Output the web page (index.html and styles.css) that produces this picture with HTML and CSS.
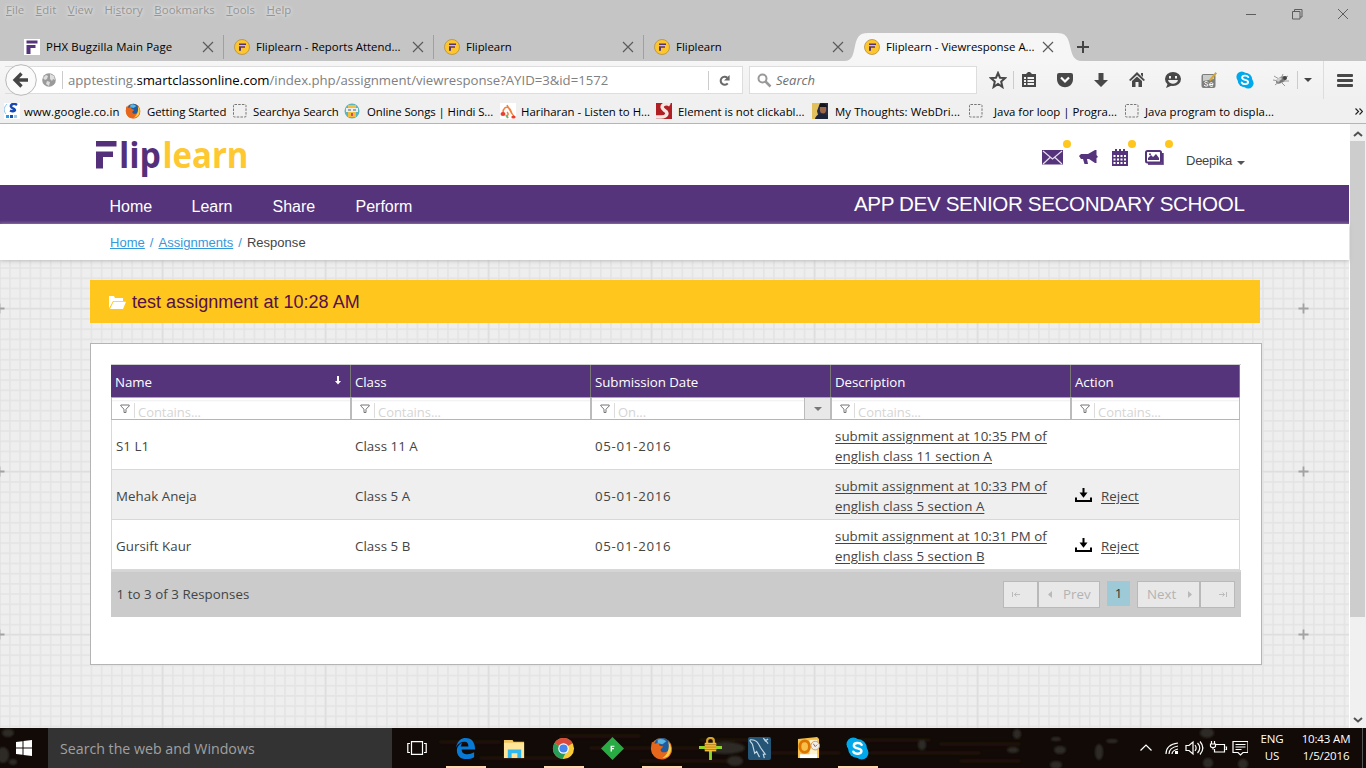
FILE: index.html
```html
<!DOCTYPE html>
<html lang="en">
<head>
<meta charset="utf-8">
<title>Fliplearn - Viewresponse Assignment</title>
<link rel="stylesheet" href="styles.css">
</head>
<body>
<svg class="defs" width="0" height="0">
  <symbol id="flip" viewBox="0 0 16 16"><circle cx="8" cy="8" r="7.500" fill="#fdc62e" stroke="#b58e3e" stroke-width=".8"/><path d="M5 4.500h7v1.600H5zM5 7.200h6v1.600H7v3H5z" fill="#55347c"/></symbol>
  <symbol id="x" viewBox="0 0 12 12"><path d="M1 1l10 10M11 1L1 11" stroke="#5b5b5b" stroke-width="1.200" fill="none"/></symbol>
  <symbol id="blank" viewBox="0 0 16 16"><rect x="1.500" y="1.500" width="12.500" height="12.500" rx="1" fill="none" stroke="#777" stroke-dasharray="2.500 1.200"/></symbol>
  <symbol id="funnel" viewBox="0 0 10 10"><path d="M.8 1h8.400v1L6 5.200V8.500H4V5.200L.8 2z" fill="none" stroke="#777"/></symbol>
  <symbol id="download" viewBox="0 0 17 14"><path d="M7.500 0h2v4.500h3L8.500 9.800 4.500 4.500h3zM0 9.500h2V12h13V9.500h2V14H0z" fill="#000"/></symbol>
  <symbol id="firefox" viewBox="0 0 24 24"><circle cx="12" cy="12" r="11" fill="#e8761c"/><circle cx="12.500" cy="9.500" r="8.500" fill="#215b9f"/><path d="M8 2.500a9 9 0 0 1 9 2l-4 3-5-1z" fill="#58b7e3"/><path d="M2 5l3 2 4-1 1 3 4 1-3 3c0 4 6 4 9 0 1-3 0-5-1-7 5 4 5 11 0 15-5 4-13 3-16-3-2-4-2-8-1-13z" fill="#e6661c"/><path d="M19 5c4 4 4 11 0 15-2 1-4 2-6 2 5-3 8-10 6-17z" fill="#f8cd4a"/></symbol>
  <symbol id="skype" viewBox="0 0 22 22"><circle cx="7" cy="7" r="6.500" fill="#00a9eb"/><circle cx="15" cy="15" r="6.500" fill="#00a9eb"/><circle cx="11" cy="11" r="9" fill="#00a9eb"/><path d="M15 7.500C13.500 5 7.500 5 7.500 8.300c0 3.400 7.300 1.800 7.300 5.200 0 3.300-6.300 3.300-7.800.5" fill="none" stroke="#fff" stroke-width="2.300" stroke-linecap="round"/></symbol>
</svg>

<header class="browser">
  <nav class="menu"><span><u>F</u>ile</span><span><u>E</u>dit</span><span><u>V</u>iew</span><span>Hi<u>s</u>tory</span><span><u>B</u>ookmarks</span><span><u>T</u>ools</span><span><u>H</u>elp</span>
    <svg class="winctl" width="112" height="14" viewBox="0 0 112 14"><path d="M6 7.500h10M52.500 4.500h7.500v7.500h-7.500zM54.500 4.500v-2H62v7.500h-2M98 2l10 10M108 2L98 12" fill="none" stroke="#5d5d5d"/></svg>
  </nav>
  <div class="tabs">
    <div class="tab"><svg class="fav" viewBox="0 0 16 16"><path d="M0 0h16v16H0z" fill="#fff"/><path d="M2.500 1.500h11v3H2.500zM2.500 6h9v3h-5v6h-4z" fill="#55347c"/></svg><span class="t1">PHX Bugzilla Main Page</span><svg class="close"><use href="#x"/></svg></div>
    <div class="tab"><svg class="fav"><use href="#flip"/></svg><span>Fliplearn - Reports Attend...</span><svg class="close"><use href="#x"/></svg></div>
    <div class="tab"><svg class="fav"><use href="#flip"/></svg><span>Fliplearn</span><svg class="close"><use href="#x"/></svg></div>
    <div class="tab last"><svg class="fav"><use href="#flip"/></svg><span>Fliplearn</span><svg class="close"><use href="#x"/></svg></div>
    <div class="tab active"><svg class="shape" width="238" height="28" viewBox="0 0 238 28"><path d="M0 28c9 0 9-7 11-15C13 4 15 0 24 0h189c9 0 11 4 13 13 2 8 3 15 12 15z" fill="#f6f6f6"/></svg><svg class="fav"><use href="#flip"/></svg><span>Fliplearn - Viewresponse A...</span><svg class="close"><use href="#x"/></svg></div>
    <svg class="plus" width="12" height="12" viewBox="0 0 12 12"><path d="M6 0v12M0 6h12" stroke="#444" stroke-width="2"/></svg>
  </div>
  <div class="navbar">
    <div class="urlbox">
      <svg class="back" width="32" height="32" viewBox="0 0 32 32"><circle cx="16" cy="16" r="15.300" fill="#fafafa" stroke="#b8b8b8"/><path d="M16.500 9.500L10 16l6.500 6.500M10 16h13" fill="none" stroke="#444" stroke-width="3.300"/></svg>
      <svg class="globe" width="14" height="14" viewBox="0 0 14 14"><circle cx="7" cy="7" r="6.800" fill="#9a9a9a"/><path d="M1 5l3-3 2 1-1 3-2 1zM8 1l4 2 1 4-2-1-1 2-2-2zM5 8l3 1-1 4-3-2z" fill="#dedede"/></svg>
      <p class="url">apptesting.<b>smartclassonline.com</b>/index.php/assignment/viewresponse?AYID=3&amp;id=1572</p>
      <div class="reload"><svg width="13" height="13" viewBox="0 0 14 14"><path d="M10.500 10A4.300 4.300 0 1 1 10 4" fill="none" stroke="#6a6a6a" stroke-width="2.200"/><path d="M12.500 1v6h-6z" fill="#6a6a6a"/></svg></div>
    </div>
    <div class="search"><svg width="15" height="15" viewBox="0 0 15 15"><circle cx="5.500" cy="5.500" r="4" fill="none" stroke="#999" stroke-width="2"/><path d="M8.500 8.500l5 5" stroke="#999" stroke-width="2.500"/></svg><i>Search</i></div>
    <div class="tools">
      <svg viewBox="0 0 18 18"><path d="M9 2l2 4.700 5 .4-3.800 3.400L13.400 16 9 13l-4.400 3 1.200-5.500L2 7.100l5-.4z" fill="none" stroke="#484848" stroke-width="2"/></svg>
      <svg viewBox="0 0 18 18"><path d="M2 3h4l2-2h2l2 2h4v13H2z" fill="#484848"/><path d="M4 6h2v2H4zM7.500 6H14v2H7.500zM4 9h2v2H4zM7.500 9H14v2H7.500zM4 12h2v2H4zM7.500 12H14v2H7.500z" fill="#f2f2f2"/></svg>
      <svg viewBox="0 0 18 18"><path d="M1 4q0-2 2-2h12q2 0 2 2v4c0 11-16 11-16 0z" fill="#484848"/><path d="M5 6.500l4 4 4-4" fill="none" stroke="#fff" stroke-width="2.200"/></svg>
      <svg viewBox="0 0 18 18"><path d="M6.500 2h5v7H16l-7 7-7-7h4.500z" fill="#484848"/></svg>
      <svg viewBox="0 0 18 18"><path d="M9 1l8 8-1.500 1L9 4 2.500 10 1 9zM13 2h2v4l-2-2zM4 10l5-4.500 5 4.500v6h-3.500v-5h-3v5H4z" fill="#484848"/></svg>
      <svg viewBox="0 0 18 18"><ellipse cx="9" cy="8" rx="8" ry="7" fill="#484848"/><path d="M4 12l-2 5 7-3z" fill="#484848"/><path d="M5 5h2v2.500H5zM11 5h2v2.500h-2zM4 9h10c-1 5-9 5-10 0z" fill="#eee"/></svg>
      <svg viewBox="0 0 18 18"><rect x="1.500" y="3" width="14" height="14" rx="2" fill="#7d7f7c"/><path d="M3 4h11v4L3 10z" fill="#ccc"/><path d="M8 11.500c-1-2-4-1-3 .5s3 .5 3 2-3 1.500-4 0M9.500 13.500H13c0-3-3.500-2-3.500 0s2.500 2.500 3.500 1.200" stroke="#fff" fill="none"/><path d="M9 9l6.500-8L17 2.500 10.500 10z" fill="#d6a52f"/></svg>
      <svg><use href="#skype"/></svg>
      <svg viewBox="0 0 18 18"><ellipse cx="9" cy="9" rx="5.500" ry="3" transform="rotate(-30 9 9)" fill="#777"/><path d="M2 5l5 3M1 9l6 1M3 14l5-4M9 8l2-5M11 8l5-3M11 10l6 0M9 11l4 4" stroke="#999" fill="none"/><circle cx="13" cy="7" r="2" fill="#444"/><path d="M4 9l4-3 2 2-4 3z" fill="#ccc"/></svg>
    </div>
    <svg class="more" width="8" height="4"><path d="M0 0h8L4 4z" fill="#444"/></svg>
    <div class="burger"><i></i><i></i><i></i></div>
  </div>
  <div class="bookmarks">
    <div class="bm b1"><svg viewBox="0 0 16 16"><path d="M0 0h16v16H0z" fill="#fff"/><path d="M13 2C9-1 4 3 9 5.500c4 1.500 1 4-3 2" fill="none" stroke="#1749b2" stroke-width="2.500"/><path d="M3 1C-1 5 0 9 2 11" fill="none" stroke="#8ec4ee"/><path d="M2 12h3v3H2z" fill="#2b9ae5"/><path d="M6 12h3v3H6z" fill="#1752ad"/><path d="M10 12h3v3h-3z" fill="#9bc7e7"/></svg><span>www.google.co.in</span></div>
    <div class="bm b2"><svg><use href="#firefox"/></svg><span>Getting Started</span></div>
    <div class="bm b3"><svg><use href="#blank"/></svg><span>Searchya Search</span></div>
    <div class="bm b4"><svg viewBox="0 0 16 16"><circle cx="8" cy="8" r="7.500" fill="#5bb5bd"/><path d="M4 2h8v12H4z" fill="#f3bd40"/><path d="M2 5h12v4H2z" fill="#eee"/><path d="M4 7h3M9 7h3" stroke="#3d6670"/><path d="M7 10h2v3H7z" fill="#d54b70"/></svg><span>Online Songs | Hindi S...</span></div>
    <div class="bm b5"><svg viewBox="0 0 16 16"><path d="M0 0h16v16H0z" fill="#fff"/><path d="M3 10c0-5 3-7 6-5 3 2 1 5 5 8M7 2l5 9M6 13c2 0 3-2 1-4" fill="none" stroke="#f2803e" stroke-width="1.500"/><ellipse cx="3" cy="11" rx="2.500" ry="2" fill="#e83f31"/><ellipse cx="13.500" cy="14" rx="2.200" ry="1.600" fill="#e83f31"/><path d="M6 12l2 3" stroke="#70b56f" stroke-width="2"/></svg><span>Hariharan - Listen to H...</span></div>
    <div class="bm b6"><svg viewBox="0 0 16 16"><path d="M0 0h16v16H0z" fill="#b01f24"/><path d="M14 2C9-1 3 3 8 7c5 3 3 7-3 7H0" fill="none" stroke="#f2e5e2" stroke-width="3.500"/></svg><span>Element is not clickabl...</span></div>
    <div class="bm b7"><svg viewBox="0 0 16 16"><path d="M0 0h16v16H0z" fill="#252a45"/><path d="M0 0h8L5 8l2 8H0z" fill="#e2c15d"/><ellipse cx="11" cy="6" rx="3.200" ry="4.500" fill="#9c6749"/><path d="M7 3c1-4 8-3 8 1l-7 0z" fill="#171417"/><path d="M3 16c1-6 11-7 13-2v2z" fill="#1c2238"/></svg><span>My Thoughts: WebDri...</span></div>
    <div class="bm b8"><svg><use href="#blank"/></svg><span>Java for loop | Progra...</span></div>
    <div class="bm b9"><svg><use href="#blank"/></svg><span>Java program to displa...</span></div>
    <svg class="chev" width="8" height="7" viewBox="0 0 8 7"><path d="M.5.5l3 3-3 3M4.500.5l3 3-3 3" fill="none" stroke="#222" stroke-width="1.200"/></svg>
  </div>
</header>

<div class="view">
  <main class="page">
    <div class="brandbar">
      <svg class="logo" width="156" height="46" viewBox="0 0 156 46"><path d="M2 3h20.500v5.500H2zM2 13.500h17v5.500H9v11.500H2z" fill="#55307a"/><text x="25" y="29.500" textLength="42" lengthAdjust="spacingAndGlyphs" fill="#55307a">lip</text><text x="68.500" y="29.500" textLength="86" lengthAdjust="spacingAndGlyphs" fill="#fdc830">learn</text></svg>
      <div class="alerts">
        <div class="alert dot a1"><svg width="21" height="15" viewBox="0 0 21 15"><path d="M0 0h21v14.500H0z" fill="#55347c"/><path d="M1 1l9.500 8L20 1M1 14l7-6.500M20 14l-7-6.500" fill="none" stroke="#e7e0ee" stroke-width="1.200"/></svg></div>
        <div class="alert a2"><svg width="19" height="15" viewBox="0 0 19 15"><path d="M0 6l2-2 7 0 7-4h1.500v5L19 7l-1.500 1v5H16L10 9H8l1 5H5.500L4 9 2 9z" fill="#55347c"/></svg></div>
        <div class="alert dot a3"><svg width="16" height="17" viewBox="0 0 16 17"><path d="M0 2h16v15H0z" fill="#55347c"/><path d="M3 0h2v4H3zM7 0h2v4H7zM11 0h2v4h-2z" fill="#55347c"/><path d="M1.500 6h2v2h-2zM5 6h2v2H5zM8.500 6h2v2h-2zM12 6h2v2h-2zM1.500 9.500h2v2h-2zM5 9.500h2v2H5zM8.500 9.500h2v2h-2zM12 9.500h2v2h-2zM1.500 13h2v2h-2zM5 13h2v2H5zM8.500 13h2v2h-2zM12 13h2v2h-2z" fill="#fff"/></svg></div>
        <div class="alert dot a4"><svg width="19" height="15" viewBox="0 0 19 15"><path d="M3 3h16v12H3z" fill="#8a72a5"/><rect x="1" y="1" width="15" height="11.500" rx="1.500" fill="#fff" stroke="#55347c" stroke-width="2"/><path d="M3 10V8l3-3 2 2 3-3 3 4v2z" fill="#55347c"/><circle cx="5" cy="4.200" r="1" fill="#55347c"/><path d="M17.500 3v10.800H3" fill="none" stroke="#55347c" stroke-width="1.200"/></svg></div>
        <span class="user">Deepika</span><svg class="caret" width="8" height="4"><path d="M0 0h8L4 4z" fill="#555"/></svg>
      </div>
    </div>
    <nav class="mainnav"><a class="n1">Home</a><a class="n2">Learn</a><a class="n3">Share</a><a>Perform</a><strong>APP DEV SENIOR SECONDARY SCHOOL</strong></nav>
    <div class="crumbs"><a>Home</a><i>/</i><a>Assignments</a><i>/</i><span>Response</span></div>
    <div class="canvas">
      <svg class="grid" width="1349" height="468">
        <defs>
          <pattern id="minor" x="-1.100" y="-3" width="10.1875" height="10.1875" patternUnits="userSpaceOnUse"><path d="M0 .8h10.200M.8 0v10.200" stroke="#e4e4e4" stroke-width="1.600"/></pattern>
          <pattern id="major" x="-82" y="-33" width="163" height="163" patternUnits="userSpaceOnUse"><path d="M81.500 0v163M0 81.500h163" stroke="#dedede" stroke-width="1.700"/><path d="M81.500 76.500v10M76.500 81.500h10" stroke="#a3a3a3" stroke-width="1.800"/></pattern>
        </defs>
        <rect width="100%" height="100%" fill="#eee"/><rect width="100%" height="100%" fill="url(#minor)"/><rect width="100%" height="100%" fill="url(#major)"/>
      </svg>
      <h1><svg width="17" height="13" viewBox="0 0 17 13"><path d="M0 12.500V0h5l1 2h8v3H4z" fill="#fff"/><path d="M4.500 5.700H17L14 13H1z" fill="#fff"/></svg>test assignment at 10:28 AM</h1>
      <section class="panel">
        <div class="table">
          <div class="row head"><div>Name<svg width="6" height="9" viewBox="0 0 6 9"><path d="M2 0h2v5h2L3 8.500 0 5h2z" fill="#fff"/></svg></div><div>Class</div><div>Submission Date</div><div>Description</div><div>Action</div></div>
          <div class="row filter"><div><svg><use href="#funnel"/></svg><span>Contains...</span></div><div><svg><use href="#funnel"/></svg><span>Contains...</span></div><div><svg><use href="#funnel"/></svg><span>On...</span><em><svg class="dd" width="8" height="4" viewBox="0 0 8 4"><path d="M0 0h8L4 4z" fill="#777"/></svg></em></div><div><svg><use href="#funnel"/></svg><span>Contains...</span></div><div><svg><use href="#funnel"/></svg><span>Contains...</span></div></div>
          <div class="row body"><div>S1 L1</div><div>Class 11 A</div><div class="date">05-01-2016</div><div><a>submit assignment at 10:35 PM of<br>english class 11 section A</a></div><div></div></div>
          <div class="row body alt"><div>Mehak Aneja</div><div>Class 5 A</div><div class="date">05-01-2016</div><div><a>submit assignment at 10:33 PM of<br>english class 5 section A</a></div><div><svg width="17" height="14"><use href="#download"/></svg><a>Reject</a></div></div>
          <div class="row body"><div>Gursift Kaur</div><div>Class 5 B</div><div class="date">05-01-2016</div><div><a>submit assignment at 10:31 PM of<br>english class 5 section B</a></div><div><svg width="17" height="14"><use href="#download"/></svg><a>Reject</a></div></div>
          <div class="foot"><span>1 to 3 of 3 Responses</span>
            <div class="pager">
              <button class="p1"><svg width="8" height="5" viewBox="0 0 8 5"><path d="M.5 0v5M8 2.500H2.500M4.500.5l-2 2 2 2" fill="none" stroke="#bbb"/></svg></button>
              <button class="p2"><svg width="4" height="7"><path d="M4 0v7L0 3.500z" fill="#b9b9b9"/></svg>Prev</button>
              <b>1</b>
              <button class="p3">Next<svg width="4" height="7"><path d="M0 0v7l4-3.500z" fill="#b9b9b9"/></svg></button>
              <button class="p4"><svg width="8" height="5" viewBox="0 0 8 5"><path d="M7.500 0v5M0 2.500h5.500M3.500.5l2 2-2 2" fill="none" stroke="#bbb"/></svg></button>
            </div>
          </div>
        </div>
      </section>
    </div>
  </main>
  <aside class="scroll"><svg width="10" height="6" viewBox="0 0 10 6"><path d="M1 5l4-3.500L9 5" fill="none" stroke="#505050" stroke-width="2"/></svg><i></i><svg width="10" height="6" viewBox="0 0 10 6"><path d="M1 1l4 3.500L9 1" fill="none" stroke="#505050" stroke-width="2"/></svg></aside>
</div>

<footer class="taskbar">
  <svg class="wood" width="1366" height="40">
    <defs><filter id="soft"><feGaussianBlur stdDeviation="1"/></filter></defs>
    <g filter="url(#soft)">
      <path d="M440 14h60M480 30h90M560 8h80M590 20h120M640 33h90M700 12h60M770 25h70M860 12h70M870 25h110M940 16h80M960 33h60" stroke="#24160c" stroke-width="3"/>
      <g fill="#2f2b27"><ellipse cx="8" cy="5" rx="6" ry="4"/><ellipse cx="3" cy="27" rx="6" ry="8"/><ellipse cx="13" cy="34" rx="4" ry="3"/><ellipse cx="725" cy="20" rx="20" ry="6"/><ellipse cx="735" cy="33" rx="8" ry="5"/><ellipse cx="922" cy="17" rx="4" ry="5"/><ellipse cx="1017" cy="6" rx="4" ry="5"/><ellipse cx="1013" cy="22" rx="6" ry="3"/><ellipse cx="1056" cy="11" rx="5" ry="2"/><ellipse cx="1060" cy="22" rx="6" ry="4"/><ellipse cx="1056" cy="37" rx="6" ry="4"/><ellipse cx="1099" cy="24" rx="4" ry="8"/><ellipse cx="1112" cy="13" rx="6" ry="2"/><ellipse cx="1207" cy="5" rx="7" ry="5"/><ellipse cx="1208" cy="35" rx="5" ry="5"/><ellipse cx="1243" cy="36" rx="5" ry="5"/></g>
    </g>
  </svg>
  <div class="start"><svg width="16" height="16" viewBox="0 0 16 16"><path d="M0 2l6.500-.8v6.300H0zM7.500 1L16 0v7.500H7.500zM0 8.500h6.500v6.300L0 14zM7.500 8.500H16V16l-8.500-1z" fill="#fff"/></svg></div>
  <div class="cortana">Search the web and Windows</div>
  <div class="apps">
    <div><svg class="tv" width="20" height="14" viewBox="0 0 20 14"><path d="M4.500.7h11v12.600h-11zM3 2.500H.8v9H3M17 2.500h2.200v9H17" fill="none" stroke="#fff" stroke-width="1.200"/></svg></div>
    <div class="on"><svg viewBox="0 0 24 24"><path d="M2 11C4 3 8 1 12 1c7 0 10 5 10 12H8c0 4 3 5 6 5 2 0 5-.6 7-2v5c-2 1.300-5 2-8 2-7 0-10-4-10-9 0-4 3-7 6-8-1 1-2 3-2 4h8c0-3-1-5-4-5-4 0-7 2-9 6z" fill="#0879d4"/></svg></div>
    <div><svg viewBox="0 0 24 24"><path d="M1 3h9l1 2h11v17H1z" fill="#efc55d"/><path d="M1 6h21v16H1z" fill="#ffe59a"/><path d="M5 13h14v9h-4v-5H9v5H5z" fill="#2fb9ed"/></svg></div>
    <div class="on"><svg viewBox="0 0 24 24"><circle cx="12" cy="12" r="11" fill="#f9cc35"/><path d="M12 12L2.500 6.500a11 11 0 0 1 19.100 0z" fill="#d94a3d"/><path d="M12 12L2.500 6.500A11 11 0 0 0 11 23l4-8z" fill="#269c58"/><circle cx="12" cy="12" r="5.500" fill="#fff"/><circle cx="12" cy="12" r="4.300" fill="#4586ef"/></svg></div>
    <div><svg viewBox="0 0 24 24"><path d="M12 0l12 12-12 12L0 12z" fill="#27ab42"/><path d="M10 9h4v1.300h-2.500v1.200h2v1.300h-2V15H10z" fill="#fff"/></svg></div>
    <div class="on"><svg><use href="#firefox"/></svg></div>
    <div><svg viewBox="0 0 24 24"><path d="M0 11h24M12 11v13" stroke="#8ed52a" stroke-width="3"/><path d="M8.500 7V4c0-4 7-4 7 0v3" fill="none" stroke="#d9a326" stroke-width="2.300"/><path d="M6 6h12v9H6z" fill="#f3bd37"/><path d="M6 8h12M6 10.500h12M6 13h12" stroke="#b8801c"/></svg></div>
    <div><svg viewBox="0 0 24 24"><rect width="24" height="24" rx="2" fill="#245476"/><path d="M2 3c7-1 9 4 11 8l5 7-2 0 1 4M2 3c0 3 3 3 3 6l2 8 2-2 3 6M17 2l4 5M16 1l2 3 3-2" fill="none" stroke="#c3d8e5" stroke-width="1.200"/></svg></div>
    <div><svg viewBox="0 0 24 24"><path d="M1 2l20-2 2 2v20H1z" fill="#f6c04a"/><path d="M13 3h8v18h-8z" fill="#fff2cd"/><ellipse cx="8" cy="10" rx="5" ry="6" fill="none" stroke="#dc7600" stroke-width="3"/><path d="M3 18h18v4H3z" fill="#fff"/><circle cx="19" cy="9" r="4.500" fill="#eee" stroke="#ca9858"/><path d="M17 7l2 3 2-2" stroke="#996633" fill="none"/></svg></div>
    <div class="on"><svg><use href="#skype"/></svg></div>
  </div>
  <div class="tray">
    <svg width="108" height="18" viewBox="0 0 108 18"><g fill="none" stroke="#fff" stroke-width="1.200"><path d="M.5 11.500L6 6l5.500 5.500M26 15c0-6 4-10 12-11M29 15c0-4 3-7 9-8M32 15c0-3 2-4 6-5"/><path d="M46 6.500h3l4-3.500v12l-4-3.500h-3zM55 6c1.500 2 1.500 4 0 6M57.500 4c3 3 3 7 0 10M60 2.500c3.500 4 3.500 9 0 13"/><path d="M76 5.500h8.500v7.500H74.500v-3M85.500 8h1v2.500h-1M71.500 2v3M74.500 2v3M70.500 5h5v2c0 2-5 2-5 0zM73 8.500v2"/><path d="M94 2.500h15v11h-5l-2.500 2.500-2.500-2.500h-5zM96.500 5.500h10M96.500 8h10M96.500 10.500h6" transform="translate(-1 0)"/></g><path d="M35 12h3v3h-3z" fill="#fff"/></svg>
    <p class="lang">ENG<br>US</p><p class="clock">10:43 AM<br>1/5/2016</p>
  </div>
</footer>
</body>
</html>
```
FILE: styles.css
```css
* { box-sizing: border-box; }
body { margin: 0; width: 1366px; height: 768px; overflow: hidden; display: flex; flex-direction: column; font-family: "Open Sans", "Noto Sans", sans-serif; font-size: 11.4px; color: #000; }
p, h1 { margin: 0; font-weight: normal; }
svg { flex: none; display: block; }
.defs { position: absolute; }

/* Browser chrome */
.browser { height: 124px; background: #c5c5c5; border-bottom: 1px solid #b5b5b5; flex: none; }
.menu { height: 33px; display: flex; align-items: flex-start; padding: 2px 14px 0 6px; gap: 11.500px; color: #949494; line-height: 16px; text-shadow: 0 0 4px #fff; letter-spacing: .06px; }
.winctl { margin: 5px 0 0 auto; }
.tabs { height: 28px; display: flex; align-items: center; padding-left: 14px; }
.tab { width: 210px; height: 28px; display: flex; align-items: center; padding-left: 10px; position: relative; border-right: 1px solid #a0a0a0; border-image: linear-gradient(transparent 3px, #a0a0a0 3px, #a0a0a0 25px, transparent 25px) 1; }
.tab.last, .tab.active { border-color: transparent; border-image: none; }
.tab span { margin: -2px 0 0 6px; flex: 1; white-space: nowrap; position: relative; }
.tab .t1 { letter-spacing: .12px; }
.fav { width: 16px; height: 16px; position: relative; }
.close { width: 12px; height: 12px; margin-right: 9px; position: relative; }
.shape { position: absolute; left: -10px; top: 0; }
.plus { margin-left: 13px; }
.navbar { height: 38px; display: flex; align-items: center; background: linear-gradient(#f6f6f6, #f0f0f0); padding-left: 5px; }
.urlbox { width: 738px; height: 28px; display: flex; align-items: center; background: linear-gradient(90deg, transparent 20px, #fff 20px); border: 1px solid #ddd; border-left: 0; }
.globe { margin-left: 5px; }
.url { margin-left: 6px; padding-left: 5px; border-left: 1px solid #ccc; width: 646px; line-height: 18px; font-size: 13.200px; letter-spacing: -.02px; color: #808080; white-space: nowrap; }
.url b { font-weight: normal; color: #000; }
.reload { width: 34px; height: 19px; border-left: 1px solid #ccc; display: flex; align-items: center; padding-left: 9px; }
.search { margin-left: 6px; width: 228px; height: 28px; background: #fff; border: 1px solid #ddd; display: flex; align-items: center; padding-left: 7px; font-size: 13px; color: #707070; gap: 4px; }
.tools { margin-left: 12px; display: flex; width: 309px; border-right: 1px solid #ccc; }
.tools svg { width: 18px; height: 18px; margin-right: 18px; }
.tools svg:first-child { margin-right: 6px; }
.tools svg:nth-child(2) { box-sizing: content-box; border-left: 1px solid #ccc; padding-left: 6px; }
.more { margin-left: 6px; }
.burger { margin-left: 11px; padding-left: 13px; height: 38px; border-left: 1px solid #ddd; display: flex; flex-direction: column; justify-content: center; gap: 2px; }
.burger i { width: 16px; height: 3px; background: #484848; border-radius: 1px; }
.bookmarks { height: 24px; background: #f0f0f0; display: flex; align-items: center; padding-left: 4px; white-space: nowrap; }
.bm { display: flex; align-items: center; width: 156px; gap: 6px; }
.bm svg { width: 16px; height: 16px; }
.b1 { width: 121px; gap: 4px; letter-spacing: .17px; } .b2 { width: 107px; letter-spacing: -.08px; } .b3 { width: 112px; gap: 5px; letter-spacing: -.1px; } .b4 { gap: 7px; letter-spacing: -.08px; } .b5 { gap: 5px; } .b7 { gap: 7px; letter-spacing: .08px; } .b8 { gap: 10px; } .b9 { gap: 5px; letter-spacing: .05px; }
.chev { margin-left: auto; margin-right: 3px; }

/* Web page */
.view { height: 604px; display: flex; flex: none; }
.page { width: 1349px; display: flex; flex-direction: column; background: #fff; font-size: 13.300px; color: #444; }
.brandbar { height: 61px; padding-left: 94px; display: flex; flex: none; position: relative; z-index: 1; }
.logo { margin-top: 14px; font: bold 35px "Open Sans", sans-serif; overflow: visible; }
.alerts { margin-left: auto; width: 307px; display: flex; padding-top: 26px; font-family: "Liberation Sans", sans-serif; }
.alert { position: relative; height: 20px; }
.dot::after { content: ""; position: absolute; width: 8px; height: 8px; border-radius: 50%; background: #ffc61e; top: -10px; }
.a1 { width: 37px; } .a2 { width: 33px; } .a3 { width: 33px; margin-top: -1px; } .a4 { width: 41px; }
.a1::after { left: 21px; } .a3::after { left: 16px; top: -9px; } .a4::after { left: 20px; }
.user { line-height: 21px; font-size: 13px; letter-spacing: -.25px; }
.caret { margin: 11px 0 0 5px; }
.mainnav { height: 39px; flex: none; background: linear-gradient(#55347c 90%, #664785); display: flex; color: #fff; font: 16px/43px "Liberation Sans", sans-serif; padding-left: 109.500px; }
.n1 { width: 82px; } .n2 { width: 81px; } .n3 { width: 83px; }
.mainnav strong { font-weight: normal; font-size: 20.600px; letter-spacing: -.36px; line-height: 38px; margin-left: auto; margin-right: 104.500px; }
.crumbs { height: 36px; flex: none; padding-left: 110px; line-height: 37px; font-size: 13px; font-family: "Liberation Sans", sans-serif; letter-spacing: .03px; box-shadow: 0 1px 4px #bbb; z-index: 1; display: flex; }
.crumbs a { text-decoration: underline; color: #3498db; }
.crumbs i { font-style: normal; color: #3498db; margin: 0 5px; }
.canvas { height: 468px; position: relative; padding: 20px 0 0 90px; background: #eee; overflow: hidden; }
.grid { position: absolute; left: 0; top: 0; }
h1 { position: relative; width: 1170px; height: 43px; background: #ffc61e; color: #53104c; display: flex; align-items: center; gap: 6px; padding: 2px 0 0 19px; font: 18px "Liberation Sans", sans-serif; letter-spacing: .02px; }
.panel { position: relative; margin-top: 20px; width: 1172px; height: 322px; background: #fff; border: 1px solid #b4b4b4; padding: 20px 20px 0; }
.table { width: 1130px; border-top: 1px solid #d0d0d0; }
.row { display: grid; grid-template-columns: 240px 240px 240px 240px 169px; width: 1129px; }
.row > div { display: flex; align-items: center; }
.head { height: 33px; background: #55347c; color: #fff; border-bottom: 1px solid #aaa; letter-spacing: -.06px; }
.head > div { padding: 1px 9px 0 4px; border-right: 1px solid #777; }
.head > div svg { margin: -2px 0 0 auto; }
.filter { height: 22px; border-bottom: 1px solid #b5b5b5; color: #d5d5d5; background: linear-gradient(#fff 2px, #eee 2px, #fff 4px); border-left: 1px solid #bbb; }
.filter > div { border-right: 2px solid #bbb; padding-left: 8px; }
.filter > div:last-child { border-right-width: 1px; width: 168px; }
.filter svg { width: 10px; height: 10px; }
.filter span { margin: 4px 0 0 4px; border-left: 1px solid #ddd; padding-left: 3px; height: 15px; line-height: 18px; font-size: 13px; letter-spacing: -.05px; }
.filter em { margin-left: auto; width: 26px; height: 21px; background: #e8e8e8; border-left: 1px solid #bbb; display: grid; place-items: center; }
.filter .dd { width: 8px; height: 4px; }
.body { height: 50px; line-height: 20px; border: 1px solid #d8d8d8; border-top: 0; grid-template-columns: 239px 240px 240px 240px 168px; }
.body > div { padding: 3px 0 0 4px; white-space: nowrap; letter-spacing: .05px; }
.body > .date { letter-spacing: .7px; }
.body a { text-decoration: underline; text-underline-offset: 2px; }
.body svg { margin: -3px 9px 0 0; }
.alt { background: #efefef; }
.foot { height: 47px; background: #cbcbcb; display: flex; align-items: center; justify-content: space-between; padding: 0 6px 2px 5.500px; border-top: 2px solid #d5d5d5; letter-spacing: .05px; }
.pager { display: flex; align-items: center; padding-top: 1px; }
.pager button { height: 27px; margin: 0; padding: 0; border: 1px solid #b9b9b9; background: #e8e8e8; color: #b3b3b3; font: inherit; display: flex; align-items: center; }
.p1 { width: 35px; } .p1 svg { margin-left: 8px; }
.pager .p2 { width: 62px; } .p2 svg { margin: 0 11px 0 9px; }
.pager .p3 { width: 63px; padding-left: 9px; } .p3 svg { margin-left: 12px; }
.p4 { width: 35px; } .p4 svg { margin-left: 18px; }
.pager b { width: 23px; height: 25px; background: #9ec9d6; margin: -2px 7px 0; text-align: center; line-height: 25px; font-weight: normal; color: #333; }
.scroll { width: 17px; background: #f0f0f0; border-left: 1px solid #fff; display: flex; flex-direction: column; align-items: center; padding: 7px 0 5px; }
.scroll i { width: 15px; height: 476px; background: #cdcdcd; margin: 4px 1px auto 0; }

/* Taskbar */
.taskbar { height: 40px; background: #110a06; display: flex; color: #fff; flex: none; position: relative; }
.taskbar > div { position: relative; }
.wood { position: absolute; left: 0; top: 0; }
.start { width: 48px; display: grid; place-items: center; }
.cortana { width: 344px; background: #333; color: #a0a0a0; font-size: 14.200px; line-height: 41px; padding-left: 12px; }
.apps { display: flex; }
.apps > div { width: 49px; height: 40px; display: grid; place-items: center; background: linear-gradient(#fed7ae, #fed7ae) center bottom/0 2px no-repeat; }
.apps > .on { background-size: 40px 2px; }
.apps svg { width: 23px; height: 23px; }
.apps .tv { width: 20px; height: 14px; }
.tray { margin-left: auto; width: 224px; border-right: 1px solid #555; margin-right: 3px; display: flex; align-items: center; padding-left: 1px; font-size: 11.500px; line-height: 17px; text-align: center; letter-spacing: -.15px; }
.tray svg { width: 108px; }
.lang { width: 38px; margin: -2px 0 0 5px; }
.clock { width: 62px; margin: -2px 0 0 4px; white-space: nowrap; }
```
